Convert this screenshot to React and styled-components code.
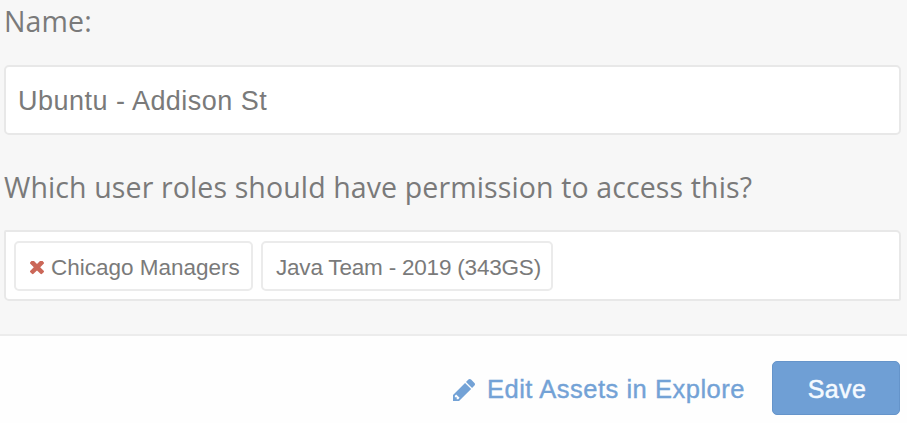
import React from 'react';
import styled, { createGlobalStyle } from 'styled-components';

const GlobalStyle = createGlobalStyle`
  * {
    box-sizing: border-box;
  }
  body {
    margin: 0;
    background: #fefefe;
    font-family: 'Liberation Sans', Arial, sans-serif;
    color: #7a7a7a;
    overflow: hidden;
  }
`;

const Panel = styled.div`
  display: flex;
  flex-direction: column;
  height: 423px;
`;

const Fields = styled.div`
  height: 336px;
  padding: 0 6px 0 4px;
  background: #f7f7f7;
  border-bottom: 2px solid #ececec;
`;

const Label = styled.label`
  display: block;
  height: ${props => props.height};
  padding-top: ${props => props.top};
  font-family: 'Open Sans', sans-serif;
  font-size: 28.5px;
  line-height: 36px;
  letter-spacing: 0.12px;
  white-space: nowrap;
`;

const Input = styled.input`
  display: block;
  width: 100%;
  height: 70px;
  padding: 2px 12px 0;
  background: #fff;
  border: 2px solid #e8e8e8;
  border-radius: 5px;
  outline: none;
  font-family: inherit;
  font-size: 27px;
  letter-spacing: 0.48px;
  color: #7a7a7a;
`;

const TagBox = styled.div`
  display: flex;
  gap: 8px;
  height: 71px;
  padding: 9px 8px;
  background: #fff;
  border: 2px solid #e8e8e8;
  border-radius: 2px 5px 2px 5px;
`;

const Tag = styled.span`
  display: flex;
  align-items: center;
  width: ${props => props.width};
  height: 50px;
  padding: 3px 0 0 13px;
  border: 2px solid #ebebeb;
  border-radius: 5px;
  font-size: 22.5px;
  letter-spacing: ${props => props.spacing || 'normal'};
  white-space: nowrap;
`;

const RemoveIcon = styled.svg`
  flex: none;
  width: 14px;
  height: 14px;
  margin: 0 7px 0 1px;
  fill: #cb6758;
`;

const Footer = styled.div`
  display: flex;
  justify-content: flex-end;
  align-items: flex-start;
  flex: 1;
  padding: 25px 7px 0 0;
`;

const ExploreLink = styled.a`
  display: flex;
  align-items: center;
  height: 57px;
  margin-right: 27px;
  font-size: 25.5px;
  letter-spacing: 0.52px;
  color: #73a2d6;
  -webkit-text-stroke: 0.4px #73a2d6;
  white-space: nowrap;
`;

const PencilIcon = styled.svg`
  width: 22px;
  height: 22px;
  margin-right: 12px;
  fill: #73a2d6;
`;

const SaveButton = styled.button`
  width: 128px;
  height: 54px;
  padding: 3px 0 0 2px;
  background: #6f9fd5;
  border: 1px solid #6594ca;
  border-radius: 5px;
  font-family: inherit;
  font-size: 25px;
  letter-spacing: 0.4px;
  color: #f5faff;
  -webkit-text-stroke: 0.5px #f5faff;
`;

const App = () => (
  <Panel>
    <GlobalStyle />
    <Fields>
      <Label htmlFor="name" top="3px" height="65px">
        Name:
      </Label>
      <Input id="name" defaultValue="Ubuntu - Addison St" />
      <Label as="div" top="34px" height="95px">
        Which user roles should have permission to access this?
      </Label>
      <TagBox>
        <Tag width="239px">
          <RemoveIcon viewBox="302 434 1188 1188">
            <path d="M1490 1322q0 40-28 68l-136 136q-28 28-68 28t-68-28l-294-294-294 294q-28 28-68 28t-68-28l-136-136q-28-28-28-68t28-68l294-294-294-294q-28-28-28-68t28-68l136-136q28-28 68-28t68 28l294 294 294-294q28-28 68-28t68 28l136 136q28 28 28 68t-28 68l-294 294 294 294q28 28 28 68z" />
          </RemoveIcon>
          Chicago Managers
        </Tag>
        <Tag width="292px" spacing="-0.2px">
          Java Team - 2019 (343GS)
        </Tag>
      </TagBox>
    </Fields>
    <Footer>
      <ExploreLink>
        <PencilIcon viewBox="128 149 1515 1515">
          <path d="M491 1536l91-91-235-235-91 91v107h128v128h107zM960 416l416 416-832 832h-416v-416zM1643 512q0 53-37 90l-166 166-416-416 166-165q36-38 90-38 53 0 91 38l235 234q37 39 37 91z" />
        </PencilIcon>
        Edit Assets in Explore
      </ExploreLink>
      <SaveButton type="button">Save</SaveButton>
    </Footer>
  </Panel>
);

export default App;
